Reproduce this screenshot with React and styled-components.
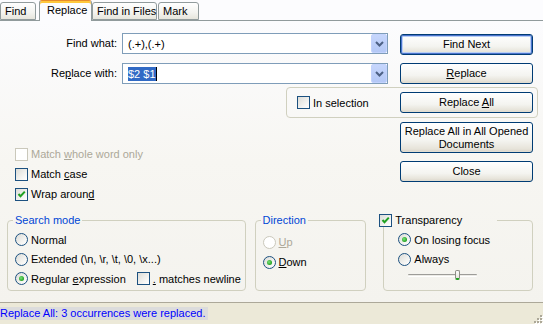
import styled, { createGlobalStyle } from "styled-components";

const GlobalStyle = createGlobalStyle`
  html, body { margin:0; padding:0; background:#ece9d8; }
  body {
    font-family: "Liberation Sans", Arial, sans-serif;
    font-size: 11px;
    color: #000;
  }
  u { text-underline-offset: 1px; }
`;

const Window = styled.div`
  width:543px;
  height:324px;
  display:flex;
  flex-direction:column;
  overflow:hidden;
`;

const TabStrip = styled.div`
  height:20px;
  display:flex;
  align-items:flex-end;
  border-bottom:1px solid #919b9c;
  background:#fcfcfe;
`;

const Tab = styled.div`
  box-sizing:border-box;
  width:${p => p.w}px;
  height:${p => (p.active ? 21 : 18)}px;
  margin-left:${p => p.ml || 0}px;
  margin-bottom:${p => (p.active ? -1 : 0)}px;
  padding-left:${p => (p.active ? 7 : 4)}px;
  line-height:${p => (p.active ? 18 : 17)}px;
  border:1px solid #919b9c;
  border-bottom:${p => (p.active ? "none" : "1px solid #919b9c")};
  border-top-color:${p => (p.active ? "#e68b2c" : "#919b9c")};
  border-radius:3px 3px 0 0;
  background:${p => (p.active ? "#fcfcfe" : "linear-gradient(#fff, #f3f3ef 60%, #e6e5dc)")};
  box-shadow:${p => (p.active ? "inset 0 2px 0 #ffc83c" : "none")};
  white-space:nowrap;
  position:relative;
  z-index:${p => (p.active ? 1 : 0)};
`;

const Panel = styled.div`
  flex:1;
  display:flex;
  flex-direction:column;
  padding:12px 10px 0 0;
  background:linear-gradient(#fcfcfe, #f7f6f2 50%, #f4f3ee);
`;

const FieldRow = styled.div`
  display:flex;
  align-items:flex-start;
  height:21px;
  margin-bottom:9px;
`;

const FieldLabel = styled.div`
  width:117px;
  text-align:right;
  line-height:21px;
  white-space:nowrap;
`;

const Combo = styled.div`
  box-sizing:border-box;
  width:266px;
  height:21px;
  margin-left:5px;
  margin-right:12px;
  border:1px solid #7f9db9;
  background:#fff;
  display:flex;
  align-items:center;
  padding-left:5px;
`;

const ComboText = styled.span`
  line-height:14px;
  ${p => p.selected && `
    background:#316ac5;
    color:#fff;
    border-right:1px solid #000;
  `}
`;

const DropBtn = styled.span`
  margin-left:auto;
  width:16px;
  height:19px;
  box-sizing:border-box;
  border:1px solid #c3d3fd;
  border-radius:2px;
  background:linear-gradient(#c6d6fc, #b4c8f6);
  display:flex;
  align-items:center;
  justify-content:center;
`;

const Button = styled.div`
  box-sizing:border-box;
  width:133px;
  height:${p => p.h || 21}px;
  margin-top:${p => p.mt || 0}px;
  border:1px solid #003c74;
  border-radius:3px;
  background:linear-gradient(#fff, #f4f4f0 60%, #e6e3d9 90%, #d6d0c5);
  box-shadow:${p => (p.primary ? "inset 0 0 0 1px #4a72cc, inset 0 0 0 2px #b8cff5" : "inset 0 -1px 0 #e0ddd2")};
  display:flex;
  align-items:center;
  justify-content:center;
  text-align:center;
  line-height:13px;
  flex-shrink:0;
`;

const SelectionBox = styled.div`
  box-sizing:border-box;
  width:252px;
  height:31px;
  margin-left:286px;
  margin-top:-6px;
  border:1px solid #d0d0bf;
  border-radius:4px;
  padding:4px 4px 4px 10px;
  display:flex;
  align-items:center;
  justify-content:space-between;
`;

const Lower = styled.div`
  display:flex;
  margin-top:4px;
`;

const OptionsCol = styled.div`
  padding-top:22px;
  padding-left:15px;
  display:flex;
  flex-direction:column;
`;

const ButtonsCol = styled.div`
  margin-left:auto;
  display:flex;
  flex-direction:column;
  gap:8px;
`;

const Item = styled.label`
  display:flex;
  align-items:center;
  gap:3px;
  height:${p => p.h || 20}px;
  white-space:nowrap;
  color:${p => (p.disabled ? "#aca899" : "#000")};
  margin-left:${p => p.ml || 0}px;
`;

const Box = styled.span`
  box-sizing:border-box;
  width:13px;
  height:13px;
  flex-shrink:0;
  border:1px solid ${p => (p.disabled ? "#cac8bb" : "#1c5180")};
  background:${p => (p.disabled ? "#fff" : "linear-gradient(135deg, #dcdcd7, #f6f6f4 70%, #fff)")};
  display:flex;
  align-items:center;
  justify-content:center;
`;

const Radio = styled.span`
  box-sizing:border-box;
  width:13px;
  height:13px;
  flex-shrink:0;
  border-radius:50%;
  border:1px solid ${p => (p.disabled ? "#cac8bb" : "#1c5180")};
  background:${p => (p.disabled ? "#fff" : "linear-gradient(135deg, #dcdcd7, #f6f6f4 70%, #fff)")};
  display:flex;
  align-items:center;
  justify-content:center;
  &::after{
    content:"";
    display:${p => (p.checked ? "block" : "none")};
    width:5px;
    height:5px;
    border-radius:50%;
    background:radial-gradient(circle at 40% 40%, #7be37a, #21a121 70%);
  }
`;

const Groups = styled.div`
  display:flex;
  align-items:flex-start;
  padding-left:7px;
  margin-top:auto;
  margin-bottom:11px;
`;

const Group = styled.fieldset`
  box-sizing:border-box;
  margin:0 ${p => p.mr || 0}px 0 0;
  padding:0;
  width:${p => p.w}px;
  height:77px;
  border:1px solid #d0d0bf;
  border-radius:4px;
  min-width:0;
`;

const Legend = styled.legend`
  padding:0 2px;
  margin-left:${p => p.ml ?? 5}px;
  width:${p => (p.w ? p.w + "px" : "auto")};
  box-sizing:border-box;
  color:#0046d5;
  line-height:13px;
  display:flex;
  align-items:center;
  gap:3px;
`;

const LegendText = styled.span`
  color:#000;
`;

const GroupBody = styled.div`
  padding:${p => p.pt || 4}px 0 0 ${p => p.pl || 7}px;
  display:flex;
  flex-direction:column;
`;

const Row = styled.div`
  display:flex;
  align-items:center;
`;

const Slider = styled.div`
  position:relative;
  width:69px;
  height:12px;
  margin-left:10px;
  display:flex;
  align-items:center;
`;

const Track = styled.span`
  width:100%;
  height:3px;
  box-sizing:border-box;
  border-top:1px solid #9d9c99;
  border-bottom:1px solid #fff;
  background:#ecebe6;
  border-radius:1px;
`;

const Thumb = styled.span`
  position:absolute;
  left:47px;
  top:1px;
  width:5px;
  height:10px;
  box-sizing:border-box;
  border:1px solid #8d8d86;
  border-bottom:2px solid #21a121;
  border-radius:2px;
  background:linear-gradient(#fff, #e4e3dc);
`;

const StatusBar = styled.div`
  height:21px;
  border-top:1px solid #aca899;
  background:#ece9d8;
  display:flex;
  align-items:center;
`;

const StatusText = styled.span`
  color:#0000ff;
  background:#dcdcdc;
  line-height:13px;
  padding-right:3px;
  white-space:nowrap;
`;

const Grip = styled.svg`
  margin-left:auto;
  align-self:flex-end;
`;

const Check = () => (
  <svg width="9" height="9" viewBox="0 0 9 9">
    <path d="M1.5 4 L3.5 6.3 L7.8 1.6" fill="none" stroke="#21a121" strokeWidth="2" />
  </svg>
);

const Chevron = () => (
  <svg width="9" height="6" viewBox="0 0 9 6">
    <path d="M1 1 L4.5 4.5 L8 1" fill="none" stroke="#4d6185" strokeWidth="2" />
  </svg>
);

const CheckItem = ({ checked, disabled, children, h, ml }) => (
  <Item disabled={disabled} h={h} ml={ml}>
    <Box disabled={disabled}>{checked && <Check />}</Box>
    <span>{children}</span>
  </Item>
);

const RadioItem = ({ checked, disabled, children, h }) => (
  <Item disabled={disabled} h={h}>
    <Radio checked={checked} disabled={disabled} />
    <span>{children}</span>
  </Item>
);

export default function App() {
  return (
    <Window>
      <GlobalStyle />
      <TabStrip>
        <Tab w={36}>Find</Tab>
        <Tab w={53} ml={3} active>Replace</Tab>
        <Tab w={65}>Find in Files</Tab>
        <Tab w={41} ml={1}>Mark</Tab>
      </TabStrip>
      <Panel>
        <FieldRow>
          <FieldLabel>Find what:</FieldLabel>
          <Combo>
            <ComboText>(.+),(.+)</ComboText>
            <DropBtn><Chevron /></DropBtn>
          </Combo>
          <Button primary mt={1}><span>Find Next</span></Button>
        </FieldRow>
        <FieldRow>
          <FieldLabel>Re<u>p</u>lace with:</FieldLabel>
          <Combo>
            <ComboText selected>$2 $1</ComboText>
            <DropBtn><Chevron /></DropBtn>
          </Combo>
          <Button><span><u>R</u>eplace</span></Button>
        </FieldRow>
        <SelectionBox>
          <CheckItem h={21}>In selection</CheckItem>
          <Button><span>Replace <u>A</u>ll</span></Button>
        </SelectionBox>
        <Lower>
          <OptionsCol>
            <CheckItem disabled>Match <u>w</u>hole word only</CheckItem>
            <CheckItem>Match <u>c</u>ase</CheckItem>
            <CheckItem checked>Wrap aroun<u>d</u></CheckItem>
          </OptionsCol>
          <ButtonsCol>
            <Button h={31}><span>Replace All in All Opened<br />Documents</span></Button>
            <Button><span>Close</span></Button>
          </ButtonsCol>
        </Lower>
        <Groups>
          <Group w={239} mr={9}>
            <Legend>Search mode</Legend>
            <GroupBody pt={3}>
              <RadioItem h={19.5}>Normal</RadioItem>
              <RadioItem h={19.5}>Extended (\n, \r, \t, \0, \x...)</RadioItem>
              <Row>
                <RadioItem checked h={19.5}>Regular <u>e</u>xpression</RadioItem>
                <CheckItem h={19.5} ml={11}><u>.</u> matches newline</CheckItem>
              </Row>
            </GroupBody>
          </Group>
          <Group w={112} mr={17}>
            <Legend>Direction</Legend>
            <GroupBody pt={5}>
              <RadioItem disabled><u>U</u>p</RadioItem>
              <RadioItem checked><u>D</u>own</RadioItem>
            </GroupBody>
          </Group>
          <Group w={150}>
            <Legend ml={-7} w={120}>
              <Box><Check /></Box>
              <LegendText>Transparency</LegendText>
            </Legend>
            <GroupBody pt={3} pl={14}>
              <RadioItem checked h={19.5}>On losing focus</RadioItem>
              <RadioItem h={19.5}>Always</RadioItem>
              <Slider>
                <Track />
                <Thumb />
              </Slider>
            </GroupBody>
          </Group>
        </Groups>
      </Panel>
      <StatusBar>
        <StatusText>Replace All: 3 occurrences were replaced.</StatusText>
        <Grip width="12" height="12" viewBox="0 0 12 12">
          {[[9, 3], [6, 6], [9, 6], [3, 9], [6, 9], [9, 9]].map(([x, y]) => (
            <g key={`${x}-${y}`}>
              <rect x={x + 1} y={y + 1} width="2" height="2" fill="#fff" />
              <rect x={x} y={y} width="2" height="2" fill="#aca899" />
            </g>
          ))}
        </Grip>
      </StatusBar>
    </Window>
  );
}
